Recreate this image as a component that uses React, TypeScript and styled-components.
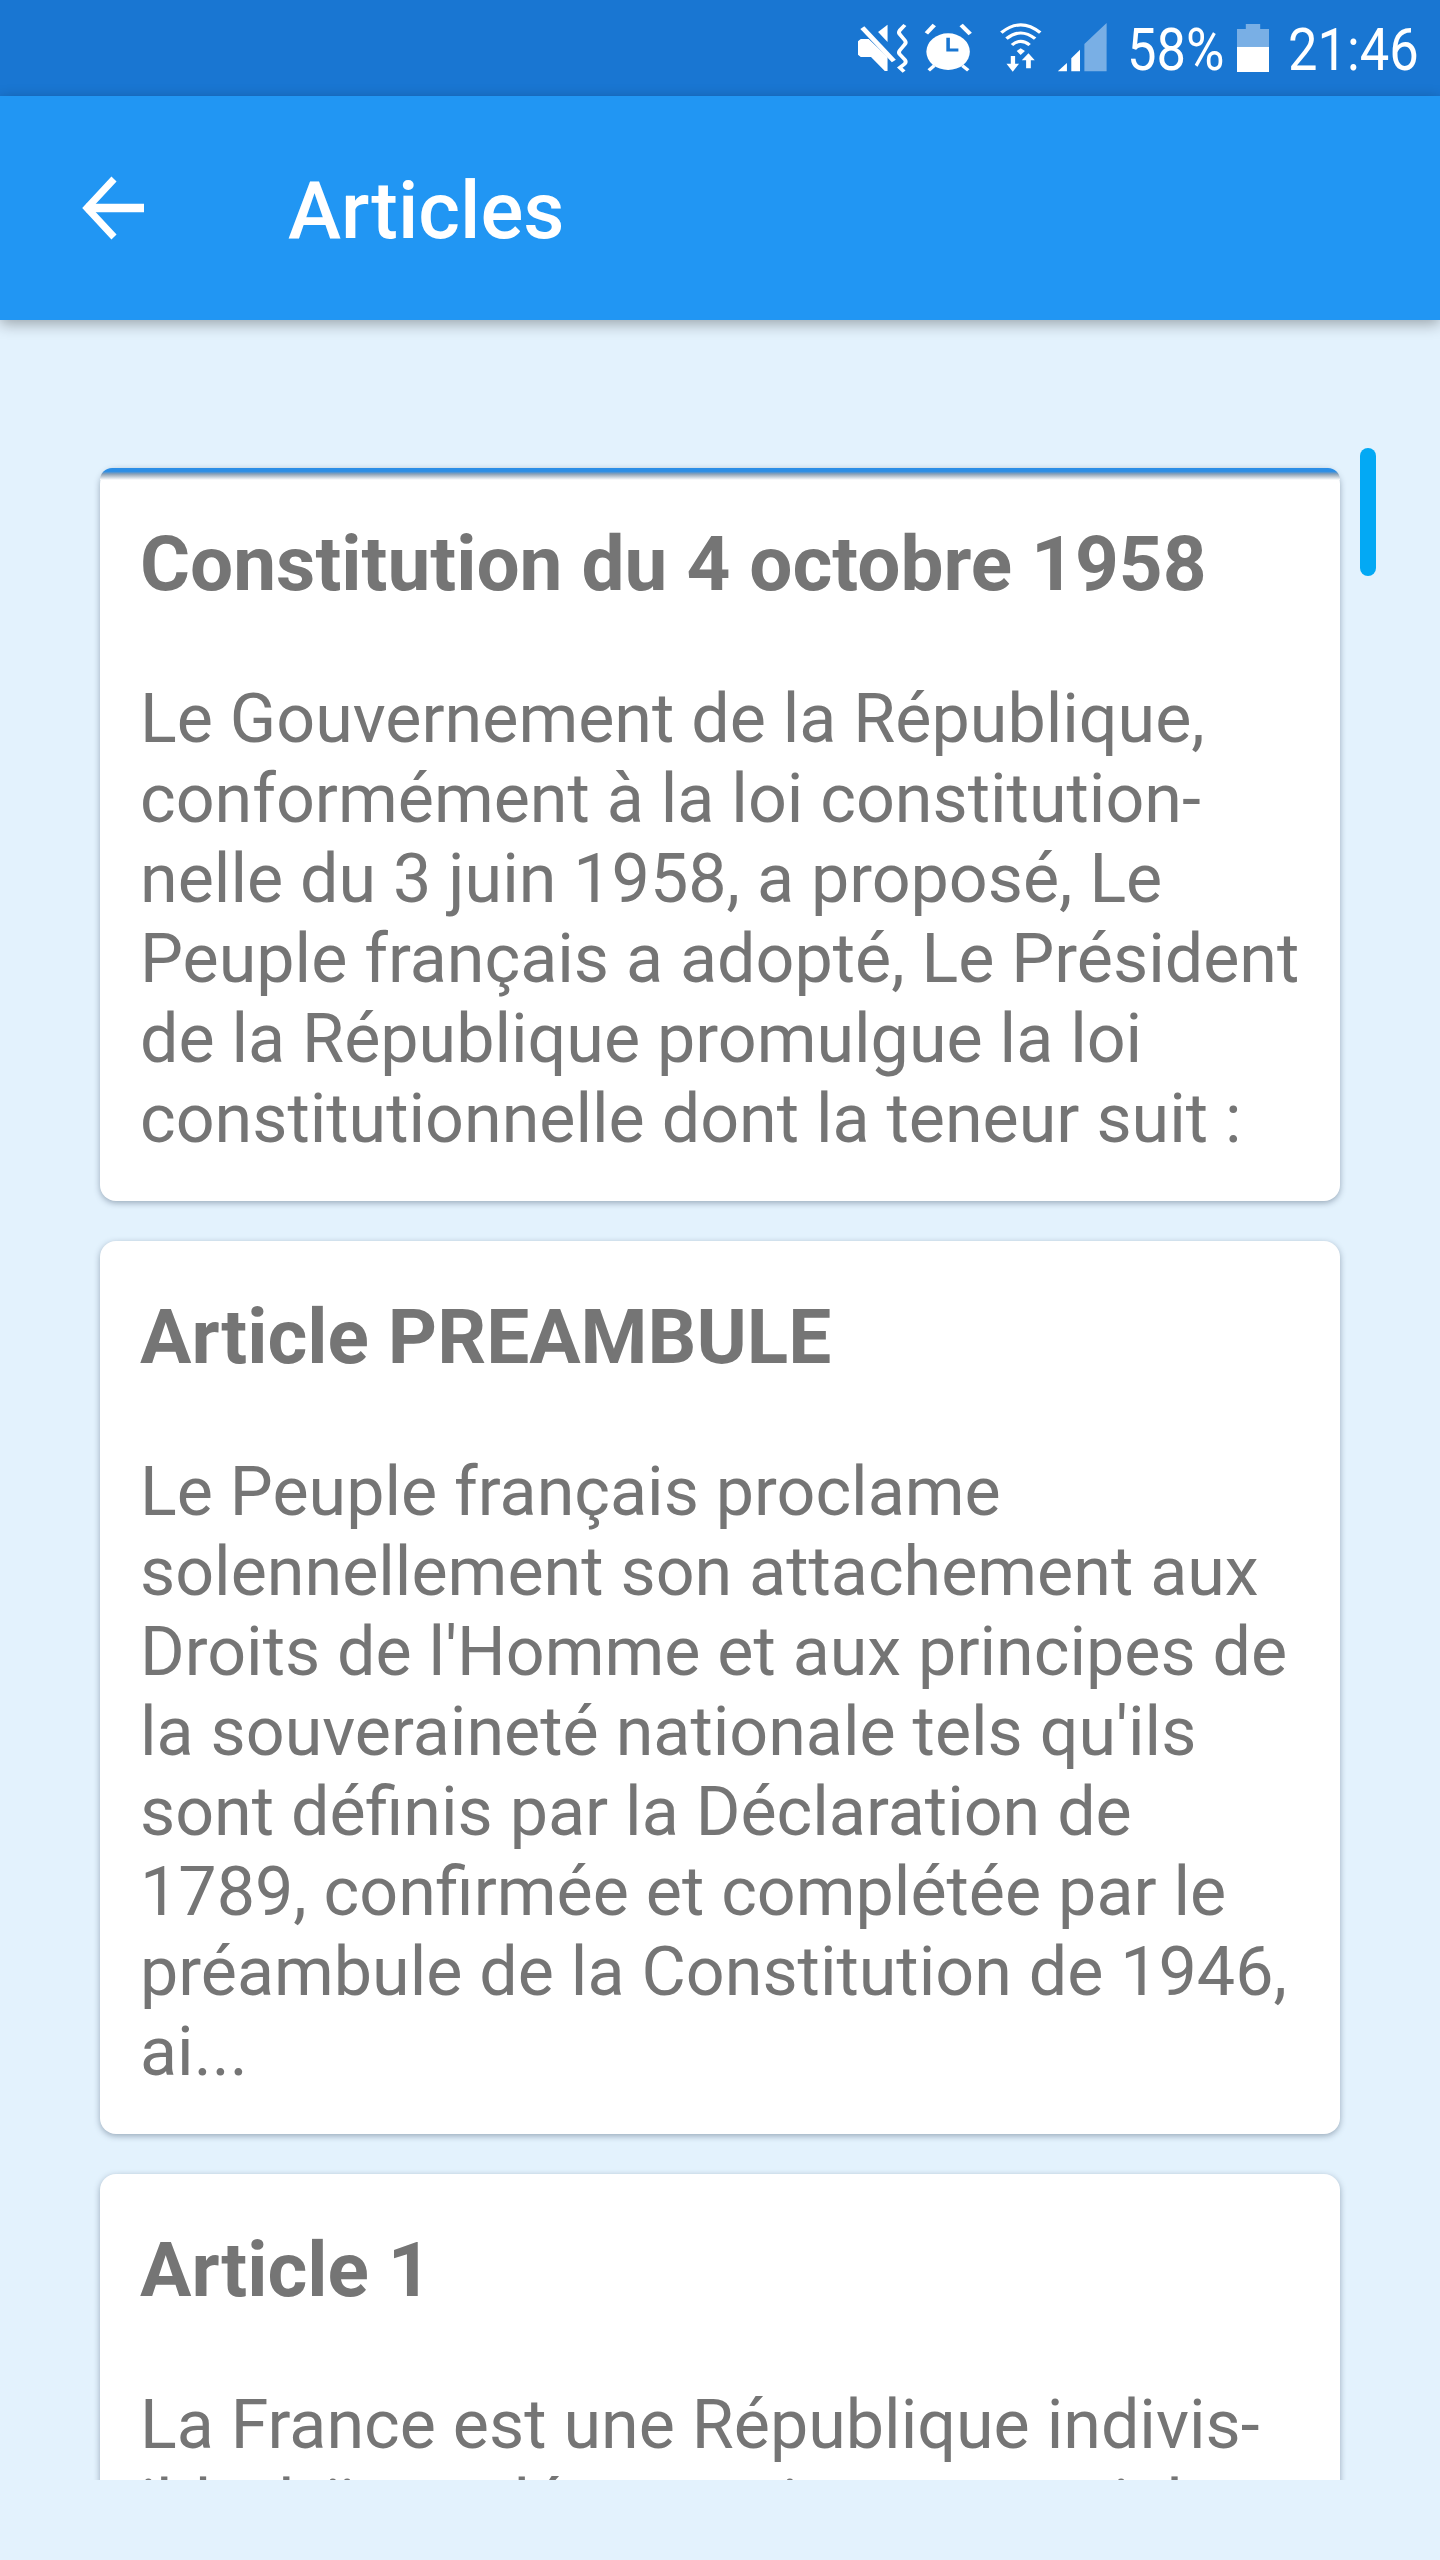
import React from "react";
import styled, { createGlobalStyle } from "styled-components";

const Global = createGlobalStyle`
  html, body { margin: 0; padding: 0; background: #e3f2fd; }
  * { box-sizing: border-box; }
`;

const Page = styled.div`
  width: 1440px;
  height: 2560px;
  display: flex;
  flex-direction: column;
  background: #e3f2fd;
  font-family: Roboto, "Liberation Sans", sans-serif;
  overflow: hidden;
`;

const StatusBar = styled.div`
  height: 96px;
  flex: none;
  background: #1976d2;
  display: flex;
  align-items: flex-start;
  justify-content: flex-end;
  padding-right: 21px;
  color: #fff;
`;

const StatusIcon = styled.svg<{ $ml: number; $top: number }>`
  display: block;
  flex: none;
  margin-left: ${(p) => p.$ml}px;
  margin-top: ${(p) => p.$top}px;
  overflow: visible;
`;

const StatusText = styled.span<{ $w: number; $ml: number }>`
  display: block;
  flex: none;
  width: ${(p) => p.$w}px;
  margin-left: ${(p) => p.$ml}px;
  margin-top: 15px;
  font-size: 60px;
  line-height: 70px;
  font-weight: 400;
  white-space: nowrap;
  transform: scaleX(0.875);
  transform-origin: left center;
`;

const AppBar = styled.header`
  height: 224px;
  flex: none;
  background: #2196f3;
  display: flex;
  align-items: center;
  padding-left: 80px;
  box-shadow: 0 4px 14px rgba(0, 0, 0, 0.32);
  position: relative;
  z-index: 2;
`;

const BackIcon = styled.svg`
  display: block;
  flex: none;
  width: 64px;
  height: 64px;
`;

const Title = styled.h1`
  margin: 6px 0 0 144px;
  color: #fff;
  font-size: 80px;
  line-height: 94px;
  font-weight: 500;
`;

const Scroller = styled.main`
  height: 2160px;
  flex: none;
  overflow: hidden;
  position: relative;
  padding: 148px 100px 0;
  display: flex;
  flex-direction: column;
  gap: 40px;
`;

const ScrollThumb = styled.div`
  position: absolute;
  left: 1360px;
  top: 128px;
  width: 16px;
  height: 128px;
  border-radius: 8px;
  background: #03a9f4;
`;

const Card = styled.article<{ $first?: boolean }>`
  flex: none;
  position: relative;
  background: #fff;
  border-radius: 16px;
  padding: 48px 40px 42px;
  box-shadow: 0 2px 6px rgba(40, 60, 85, 0.4);
  ${(p) =>
    p.$first
      ? `&::before {
    content: "";
    position: absolute;
    left: 0;
    right: 0;
    top: 0;
    height: 12px;
    border-radius: 16px 16px 0 0;
    background: linear-gradient(#2b8ee6 0, #2b8ee6 28%, #8aa0b5 50%, #ffffff 100%);
  }`
      : ""}
`;

const CardTitle = styled.h2`
  margin: 0 0 67px;
  color: #757575;
  font-size: 76.5px;
  line-height: 96px;
  font-weight: 700;
`;

const CardBody = styled.p`
  margin: 0;
  color: #757575;
  font-size: 68.2px;
  line-height: 80px;
  font-weight: 400;
  white-space: pre;
`;

const articles = [
  {
    title: "Constitution du 4 octobre 1958",
    body: "Le Gouvernement de la République,\nconformément à la loi constitution-\nnelle du 3 juin 1958, a proposé, Le\nPeuple français a adopté, Le Président\nde la République promulgue la loi\nconstitutionnelle dont la teneur suit :",
  },
  {
    title: "Article PREAMBULE",
    body: "Le Peuple français proclame\nsolennellement son attachement aux\nDroits de l'Homme et aux principes de\nla souveraineté nationale tels qu'ils\nsont définis par la Déclaration de\n1789, confirmée et complétée par le\npréambule de la Constitution de 1946,\nai...",
  },
  {
    title: "Article 1",
    body: "La France est une République indivis-\nible, laïque, démocratique et sociale.\nElle assure l'égalité devant la loi",
  },
];

export default function App() {
  return (
    <Page>
      <Global />
      <StatusBar>
        <StatusIcon $ml={0} $top={23} width="52" height="50" viewBox="97 70 132 150" preserveAspectRatio="none" fill="#fff">
          <polygon points="148,97 172,75 172,127" />
          <polygon points="104,118 124,118 172,172 172,214 165,214 130,172 104,172 97,165 97,125" />
          <line x1="108" y1="84" x2="188" y2="184" stroke="#fff" strokeWidth="13" />
          <path d="M216 76 L203 92 Q199 98 203 104 L216 122 Q220 128 216 134 L203 152 Q199 158 203 164 L216 180 Q220 186 216 192 L203 204 L214 216" fill="none" stroke="#fff" strokeWidth="10" />
        </StatusIcon>
        <StatusIcon $ml={14} $top={23} width="49" height="50" viewBox="264 70 124 150" preserveAspectRatio="none" fill="#fff">
          <circle cx="325" cy="156" r="55" />
          <line x1="290" y1="76" x2="270" y2="101" stroke="#fff" strokeWidth="11" />
          <line x1="358" y1="76" x2="381" y2="103" stroke="#fff" strokeWidth="11" />
          <line x1="290" y1="198" x2="276" y2="212" stroke="#fff" strokeWidth="9" />
          <line x1="361" y1="198" x2="376" y2="212" stroke="#fff" strokeWidth="9" />
          <path d="M325 114 V151 H351" fill="none" stroke="#1976d2" strokeWidth="9" />
        </StatusIcon>
        <StatusIcon $ml={26} $top={22} width="44" height="50" viewBox="452 68 112 150" preserveAspectRatio="none" fill="#fff">
          <path d="M458 100 Q507 53 557 100" fill="none" stroke="#fff" strokeWidth="9" />
          <path d="M471 118 Q507 84 544 118" fill="none" stroke="#fff" strokeWidth="9" />
          <path d="M485 137 Q507 115 530 137" fill="none" stroke="#fff" strokeWidth="9" />
          <polygon points="497,155 507,147 518,155 507,167" />
          <polygon points="482,170 493,170 493,193 503,193 487,217 471,193 482,193" />
          <polygon points="521,207 533,207 533,183 543,183 527,162 510,183 521,183" />
        </StatusIcon>
        <StatusIcon $ml={14} $top={23} width="50" height="49" viewBox="600 70 126 147" preserveAspectRatio="none" fill="#fff">
          <polygon points="602,215 625,190 625,215" />
          <polygon points="636,215 636,176 658,150 658,215" />
          <polygon points="669,215 669,133 725,70 725,215" opacity="0.42" />
        </StatusIcon>
        <StatusText $w={96} $ml={20}>58%</StatusText>
        <StatusIcon $ml={14} $top={24} width="32" height="48" viewBox="1055 72 80 143" preserveAspectRatio="none" fill="#fff">
          <polygon points="1077,72 1113,72 1113,87 1135,87 1135,140 1055,140 1055,87 1077,87" opacity="0.42" />
          <rect x="1055" y="140" width="80" height="75" />
        </StatusIcon>
        <StatusText $w={131} $ml={19}>21:46</StatusText>
      </StatusBar>
      <AppBar>
        <BackIcon viewBox="0 0 64 64" fill="none">
          <path d="M64 32 H6" stroke="#fff" strokeWidth="8.5" />
          <path d="M34 3 L7 32 L34 61" stroke="#fff" strokeWidth="7" />
        </BackIcon>
        <Title>Articles</Title>
      </AppBar>
      <Scroller>
        {articles.map((a, i) => (
          <Card key={a.title} $first={i === 0}>
            <CardTitle>{a.title}</CardTitle>
            <CardBody>{a.body}</CardBody>
          </Card>
        ))}
        <ScrollThumb />
      </Scroller>
    </Page>
  );
}
